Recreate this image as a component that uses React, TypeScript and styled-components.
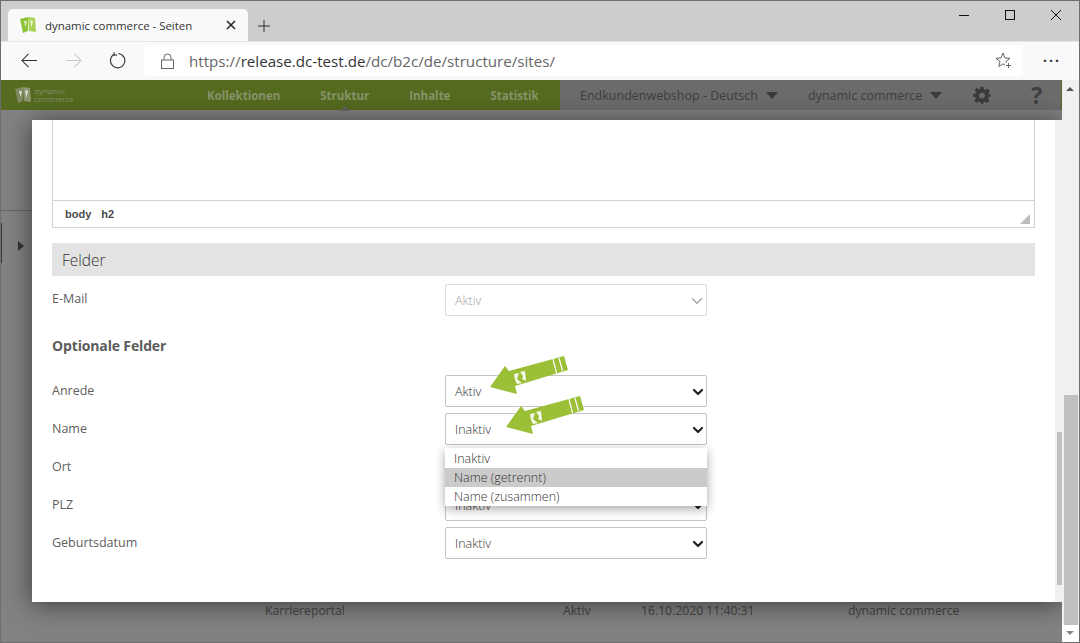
import React from 'react';
import styled, { createGlobalStyle } from 'styled-components';
import { ChevronDown } from 'lucide-react';

const GlobalStyle = createGlobalStyle`
  html, body {
    margin: 0;
    padding: 0;
    background: #fff;
  }
`;

const Screen = styled.div`
  width: 1080px;
  height: 643px;
  box-sizing: border-box;
  border: 1px solid #6e6e6e;
  display: flex;
  flex-direction: column;
  overflow: hidden;
  font-family: 'Open Sans', 'Noto Sans', sans-serif;
`;

const TabStrip = styled.div`
  height: 40px;
  flex: none;
  background: #cdcdcd;
  display: flex;
  align-items: flex-end;
  padding-left: 7px;
`;

const Tab = styled.div`
  width: 240px;
  height: 32px;
  background: #f9f9f9;
  border-radius: 5px 5px 0 0;
  display: flex;
  align-items: center;
  padding-left: 11px;
  box-sizing: border-box;
  font-size: 11.45px;
  color: #333;
  gap: 8px;
`;

const TabTitle = styled.span`
  flex: 1;
`;

const TabClose = styled.svg`
  width: 10px;
  height: 10px;
  margin-right: 12px;
`;

const NewTab = styled.svg`
  width: 14px;
  height: 14px;
  margin: 0 0 8px 9px;
`;

const WindowControls = styled.div`
  margin-left: auto;
  align-self: flex-start;
  display: flex;
  padding: 9px 18px 0 0;
  gap: 36px;
`;

const WindowIcon = styled.svg`
  width: 10px;
  height: 10px;
`;

const Toolbar = styled.div`
  height: 39px;
  flex: none;
  background: #f9f9f9;
  display: flex;
  align-items: center;
  border-top: 1px solid #e6e6e6;
  box-sizing: border-box;
  padding: 0 0 1px 20px;
`;

const NavIcon = styled.svg<{ $gap: number }>`
  width: 17px;
  height: 17px;
  flex: none;
  margin-right: ${p => p.$gap}px;
`;

const AddressBar = styled.div`
  width: 879px;
  height: 31px;
  background: #fff;
  border-radius: 4px;
  display: flex;
  align-items: center;
  box-sizing: border-box;
  padding: 0 11px 0 17px;
`;

const Url = styled.span`
  font-size: 15.15px;
  color: #333;
  margin-left: 15px;
  flex: 1;
`;

const UrlPart = styled.span`
  color: #666;
`;

const More = styled.div`
  margin-left: 20px;
  font-size: 14px;
  letter-spacing: 2px;
  color: #333;
  line-height: 10px;
  font-weight: 700;
`;

const Page = styled.div`
  flex: 1;
  position: relative;
  min-height: 0;
  background: #828282;
`;

const TopNav = styled.div`
  height: 30px;
  display: flex;
  width: 1061px;
  background: #6c6c6c;
  border-right: 1px solid #556b1f;
  box-sizing: border-box;
`;

const NavGreen = styled.div`
  width: 559px;
  background: #556b1f;
  display: flex;
  align-items: center;
  padding-left: 13px;
  box-sizing: border-box;
`;

const Logo = styled.svg`
  width: 18px;
  height: 18px;
  flex: none;
`;

const LogoText = styled.div`
  font-size: 8px;
  line-height: 8px;
  color: #858f6b;
  margin-left: 2px;
  width: 173px;
`;

const NavLinks = styled.div`
  display: flex;
  gap: 40px;
  font-size: 11.5px;
  font-weight: 700;
  color: #89936b;
`;

const NavLink = styled.span<{ $active?: boolean }>`
  position: relative;
  &::after {
    content: ${p => (p.$active ? "''" : 'none')};
    position: absolute;
    left: 50%;
    bottom: -8px;
    margin-left: -5px;
    border: 5px solid transparent;
    border-top: 0;
    border-bottom-color: #666;
  }
`;

const NavGrey = styled.div`
  flex: 1;
  display: flex;
  align-items: center;
  padding-left: 20px;
  color: #3f3f3f;
  font-size: 12.5px;
`;

const Caret = styled.span`
  border: 6px solid transparent;
  border-bottom: 0;
  border-top: 7px solid #3a3a3a;
  margin: 1px 30px 0 8px;
`;

const HelpMark = styled.span`
  font-size: 23px;
  font-weight: 700;
  margin-left: 40px;
`;

const Gear = styled.svg`
  width: 18px;
  height: 18px;
  margin-left: 1px;
  color: #3b3b3b;
`;

const BackdropLine = styled.div`
  position: absolute;
  left: 0;
  top: 130px;
  width: 31px;
  height: 1px;
  background: #666;
`;

const SideBar = styled.div`
  position: absolute;
  left: 0;
  top: 143px;
  width: 1px;
  height: 40px;
  background: #3c3c3c;
`;

const SideArrow = styled.div`
  position: absolute;
  left: 17px;
  top: 161px;
  border: 5px solid transparent;
  border-right: 0;
  border-left: 6px solid #333;
`;

const BehindRow = styled.div`
  position: absolute;
  top: 522px;
  left: 0;
  right: 0;
  font-size: 12.2px;
  color: #454545;
`;

const BehindCell = styled.span<{ $left: number }>`
  position: absolute;
  left: ${p => p.$left}px;
  white-space: nowrap;
`;

const Modal = styled.div`
  position: absolute;
  left: 31px;
  top: 40px;
  width: 1030px;
  height: 482px;
  background: #fff;
  box-sizing: border-box;
  padding: 0 20px;
  display: flex;
  flex-direction: column;
  color: #5a5a5a;
  box-shadow: 0 2px 24px rgba(0, 0, 0, 0.55);
`;

const Editor = styled.div`
  width: 983px;
  height: 108px;
  flex: none;
  box-sizing: border-box;
  border: 1px solid #d2d2d2;
  border-top: 0;
  display: flex;
  flex-direction: column;
`;

const EditorBody = styled.div`
  flex: 1;
`;

const EditorStatus = styled.div`
  height: 27px;
  flex: none;
  box-sizing: border-box;
  border-top: 1px solid #d2d2d2;
  display: flex;
  align-items: center;
  gap: 10px;
  padding: 0 4px 0 12px;
  font-family: 'Liberation Sans', Arial, sans-serif;
  font-size: 11px;
  font-weight: 700;
  color: #4a4a4a;
`;

const Resize = styled.div`
  margin-left: auto;
  align-self: flex-end;
  margin-bottom: 3px;
  width: 0;
  height: 0;
  border-style: solid;
  border-width: 0 0 10px 10px;
  border-color: transparent transparent #bdbdbd transparent;
`;

const SectionHead = styled.div`
  width: 983px;
  height: 33px;
  flex: none;
  margin-top: 15px;
  background: #e3e3e3;
  display: flex;
  align-items: center;
  padding-left: 10px;
  box-sizing: border-box;
  font-size: 15.5px;
  font-weight: 300;
  color: #333;
`;

const Row = styled.div<{ $top: number }>`
  display: flex;
  align-items: flex-start;
  flex: none;
  margin-top: ${p => p.$top}px;
  font-size: 12.5px;
`;

const Label = styled.div<{ $line: number }>`
  width: 393px;
  line-height: ${p => p.$line}px;
  color: #5e5e5e;
`;

const SubHead = styled.div`
  font-size: 14px;
  font-weight: 700;
  letter-spacing: -0.15px;
  color: #5c5c5c;
  margin-top: 19px;
  line-height: 22px;
  flex: none;
`;

const Select = styled.div<{ $disabled?: boolean }>`
  width: 262px;
  height: 32px;
  box-sizing: border-box;
  border: 1px solid ${p => (p.$disabled ? '#dcdcdc' : '#c4c4c4')};
  border-radius: 2px;
  display: flex;
  align-items: center;
  justify-content: space-between;
  padding: 1px 0 0 9px;
  font-size: 12.5px;
  font-weight: 300;
  color: ${p => (p.$disabled ? '#a0a0a0' : '#333')};
  svg {
    color: ${p => (p.$disabled ? '#a8a8a8' : '#222')};
  }
`;

const Dropdown = styled.div`
  position: absolute;
  left: 413px;
  top: 328px;
  width: 262px;
  padding-top: 1px;
  background: #fff;
  box-shadow: 0 3px 10px rgba(0, 0, 0, 0.35);
  font-size: 12.5px;
  font-weight: 300;
  color: #333;
`;

const Option = styled.div<{ $selected?: boolean }>`
  height: 19px;
  line-height: 19px;
  padding-left: 9px;
  background: ${p => (p.$selected ? '#cbcbcb' : 'transparent')};
`;

const GreenArrow = styled.svg<{ $left: number; $top: number }>`
  position: absolute;
  left: ${p => p.$left}px;
  top: ${p => p.$top}px;
  width: 84px;
  height: 42px;
`;

const InnerTrack = styled.div`
  position: absolute;
  right: 0;
  top: 0;
  bottom: 0;
  width: 7px;
  background: #f0f0f0;
`;

const InnerThumb = styled.div`
  position: absolute;
  right: 0;
  top: 312px;
  height: 153px;
  width: 5px;
  background: #c2c2c2;
`;

const OuterScroll = styled.div`
  position: absolute;
  right: 0;
  top: 0;
  bottom: 0;
  width: 17px;
  background: #f0f0f0;
`;

const ScrollUp = styled.div`
  position: absolute;
  left: 4px;
  top: 7px;
  border: 4px solid transparent;
  border-top: 0;
  border-bottom: 4px solid #555;
`;

const ScrollThumb = styled.div`
  position: absolute;
  left: 2px;
  right: 1px;
  top: 315px;
  height: 230px;
  background: #c0c0c0;
`;

const ScrollFoot = styled.div`
  position: absolute;
  left: 0;
  right: 0;
  bottom: 0;
  height: 17px;
  background: #fff;
  &::after {
    content: '';
    position: absolute;
    left: 4px;
    top: 6px;
    border: 4px solid transparent;
    border-bottom: 0;
    border-top: 4px solid #8a8a8a;
  }
`;

const DcMark = ({ c1, c2 }: { c1: string; c2: string }) => (
  <>
    <path d="M1 3 L9 1 L9 15 L4 17 Z" fill={c1} />
    <path d="M9 1 L16 2 L17 16 L10 15 Z" fill={c2} />
    <path d="M5 5 H8 L6.5 11 Z M11 4 L14 5 L12.5 12 Z" fill="#fff" opacity="0.75" />
  </>
);

const Arrow = ({ left, top }: { left: number; top: number }) => (
  <GreenArrow $left={left} $top={top} viewBox="0 0 84 42">
    <path d="M2 32 L17 11 L21 16 L76 1 L80 15 L27 31 L29 39 Z" fill="#9bbf36" />
    <path d="M65 4 L68.5 18 M71 3 L74.5 16" stroke="#fff" strokeWidth="1.2" />
    <path d="M26 19 L31 18 L29 24 L34 28 L29 29 L27 25 Z M32 17 L37 16 L38 26 L34 24 L35 21 Z" fill="#fff" opacity="0.9" />
  </GreenArrow>
);

const selects = [
  { label: 'Anrede', value: 'Aktiv', top: 18 },
  { label: 'Name', value: 'Inaktiv', top: 6 },
  { label: 'Ort', value: 'Inaktiv', top: 6 },
  { label: 'PLZ', value: 'Inaktiv', top: 6 },
  { label: 'Geburtsdatum', value: 'Inaktiv', top: 6 },
];

export default function App() {
  return (
    <Screen>
      <GlobalStyle />
      <TabStrip>
        <Tab>
          <Logo viewBox="0 0 18 18">
            <DcMark c1="#8fc43a" c2="#a9d356" />
          </Logo>
          <TabTitle>dynamic commerce - Seiten</TabTitle>
          <TabClose viewBox="0 0 10 10">
            <path d="M1 1 L9 9 M9 1 L1 9" stroke="#222" strokeWidth="1.5" />
          </TabClose>
        </Tab>
        <NewTab viewBox="0 0 14 14">
          <path d="M7 1 V13 M1 7 H13" stroke="#333" strokeWidth="1" />
        </NewTab>
        <WindowControls>
          <WindowIcon viewBox="0 0 10 10">
            <path d="M0 5.5 H10" stroke="#111" strokeWidth="1" />
          </WindowIcon>
          <WindowIcon viewBox="0 0 10 10">
            <rect x="0.5" y="0.5" width="9" height="9" fill="none" stroke="#111" />
          </WindowIcon>
          <WindowIcon viewBox="0 0 10 10">
            <path d="M0 0 L10 10 M10 0 L0 10" stroke="#111" strokeWidth="1" />
          </WindowIcon>
        </WindowControls>
      </TabStrip>
      <Toolbar>
        <NavIcon $gap={27} viewBox="0 0 18 18">
          <path d="M17 9 H1 M8 2 L1 9 L8 16" fill="none" stroke="#333" strokeWidth="1.1" />
        </NavIcon>
        <NavIcon $gap={27} viewBox="0 0 18 18">
          <path d="M1 9 H17 M10 2 L17 9 L10 16" fill="none" stroke="#c8c8c8" strokeWidth="1.1" />
        </NavIcon>
        <NavIcon $gap={18} viewBox="0 0 18 18">
          <path d="M5.5 2.5 A7.6 7.6 0 1 0 10 1.6 M5 0.5 L5.7 3.4 L8.6 3" fill="none" stroke="#333" strokeWidth="1.2" />
        </NavIcon>
        <AddressBar>
          <svg width="13" height="16" viewBox="0 0 13 16">
            <path d="M3 7 V4.5 A3.5 3.5 0 0 1 10 4.5 V7" fill="none" stroke="#666" />
            <rect x="0.5" y="7" width="12" height="8.5" fill="none" stroke="#666" />
          </svg>
          <Url>
            <UrlPart>https://</UrlPart>release.dc-test.de<UrlPart>/dc/b2c/de/structure/sites/</UrlPart>
          </Url>
          <svg width="17" height="17" viewBox="0 0 17 17">
            <path d="M8 1 L10 6 L15 6.3 L11 9.6 L12.2 14.5 L8 11.8 L3.8 14.5 L5 9.6 L1 6.3 L6 6 Z" fill="none" stroke="#666" />
            <circle cx="13.5" cy="13.5" r="3.5" fill="#fff" />
            <path d="M13.5 11 V16 M11 13.5 H16" stroke="#666" />
          </svg>
        </AddressBar>
        <More>···</More>
      </Toolbar>
      <Page>
        <TopNav>
          <NavGreen>
            <Logo viewBox="0 0 18 18">
              <DcMark c1="#7f8a63" c2="#8d9670" />
            </Logo>
            <LogoText>
              dynamic
              <br />
              commerce
            </LogoText>
            <NavLinks>
              <NavLink>Kollektionen</NavLink>
              <NavLink $active>Struktur</NavLink>
              <NavLink>Inhalte</NavLink>
              <NavLink>Statistik</NavLink>
            </NavLinks>
          </NavGreen>
          <NavGrey>
            Endkundenwebshop - Deutsch
            <Caret />
            dynamic commerce
            <Caret />
            <Gear viewBox="0 0 24 24">
              <path
                fill="currentColor"
                fillRule="evenodd"
                d="M10 1 H14 L14.7 4.3 L17 5.3 L19.8 3.4 L22.6 6.2 L20.7 9 L21.7 11.3 L24 12 V14 L21 14.7 L20 17 L21.8 19.8 L19 22.6 L16.2 20.8 L14 21.7 L13.5 24 H10.5 L10 21.7 L7.6 20.7 L4.8 22.6 L2 19.8 L3.8 17 L2.8 14.7 L0 14 V11 L3 10.3 L4 8 L2.2 5.2 L5 2.4 L7.8 4.2 L10 3.4 Z M12 8.5 A4 4 0 1 0 12.01 8.5 Z"
              />
            </Gear>
            <HelpMark>?</HelpMark>
          </NavGrey>
        </TopNav>
        <BackdropLine />
        <SideBar />
        <SideArrow />
        <BehindRow>
          <BehindCell $left={264}>Karriereportal</BehindCell>
          <BehindCell $left={562}>Aktiv</BehindCell>
          <BehindCell $left={640}>16.10.2020 11:40:31</BehindCell>
          <BehindCell $left={847}>dynamic commerce</BehindCell>
        </BehindRow>
        <Modal>
          <Editor>
            <EditorBody />
            <EditorStatus>
              <span>body</span>
              <span>h2</span>
              <Resize />
            </EditorStatus>
          </Editor>
          <SectionHead>Felder</SectionHead>
          <Row $top={8}>
            <Label $line={30}>E-Mail</Label>
            <Select $disabled>
              Aktiv
              <ChevronDown size={18} strokeWidth={2} />
            </Select>
          </Row>
          <SubHead>Optionale Felder</SubHead>
          {selects.map(item => (
            <Row key={item.label} $top={item.top}>
              <Label $line={32}>{item.label}</Label>
              <Select>
                {item.value}
                <ChevronDown size={16} strokeWidth={3.2} />
              </Select>
            </Row>
          ))}
          <Dropdown>
            <Option>Inaktiv</Option>
            <Option $selected>Name (getrennt)</Option>
            <Option>Name (zusammen)</Option>
          </Dropdown>
          <Arrow left={456} top={235} />
          <Arrow left={472} top={275} />
          <InnerTrack>
            <InnerThumb />
          </InnerTrack>
        </Modal>
        <OuterScroll>
          <ScrollUp />
          <ScrollThumb />
          <ScrollFoot />
        </OuterScroll>
      </Page>
    </Screen>
  );
}
